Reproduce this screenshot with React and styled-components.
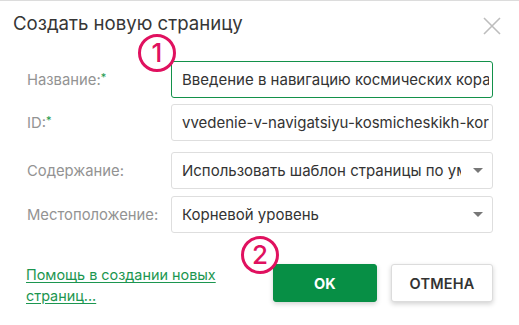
import React from "react";
import styled, { createGlobalStyle } from "styled-components";

const Global = createGlobalStyle`
  html, body { margin: 0; padding: 0; background: #fff; }
  body { font-family: Inter, "Open Sans", sans-serif; }
  * { box-sizing: border-box; }
`;

const Dialog = styled.div`
  position: relative;
  width: 519px;
  height: 325px;
  background: #fff;
  border-top: 1px solid #dcdcdc;
  overflow: hidden;
`;

const Header = styled.div`
  display: flex;
  align-items: flex-start;
  justify-content: space-between;
  padding: 10px 18px 0 13px;
  height: 60px;
`;

const Title = styled.h1`
  margin: 0;
  font-size: 18.6px;
  line-height: 24px;
  font-weight: 400;
  color: #363636;
`;

const Close = styled.button`
  margin-top: 6px;
  padding: 0;
  border: 0;
  background: none;
  width: 18px;
  height: 18px;
  display: flex;
  cursor: pointer;
`;

const Form = styled.div`
  display: flex;
  flex-direction: column;
  padding: 0 26px 0 27px;
`;

const Row = styled.div`
  display: grid;
  grid-template-columns: 144px minmax(0, 1fr);
  align-items: center;
  margin-top: ${(p) => p.$top || 0}px;
`;

const Label = styled.label`
  font-size: 14.8px;
  color: #939393;
`;

const Req = styled.span`
  color: #1a9a4c;
  font-size: 11px;
  vertical-align: top;
  position: relative;
  top: -1px;
`;

const TextInput = styled.input`
  width: 100%;
  height: 37px;
  border: 1px solid ${(p) => (p.$focus ? "#13914a" : "#dedede")};
  border-radius: 3px;
  padding: 0 3px 0 10px;
  font: inherit;
  font-size: 15px;
  color: #333;
  background: #fff;
  outline: none;
`;

const Select = styled.div`
  height: 37px;
  border: 1px solid #dedede;
  border-radius: 3px;
  display: flex;
  align-items: center;
  padding: 0 9px 0 10px;
  gap: 12px;
`;

const SelectText = styled.span`
  flex: 1;
  min-width: 0;
  overflow: hidden;
  white-space: nowrap;
  font-size: 15px;
  color: #333;
`;

const Footer = styled.div`
  display: flex;
  justify-content: space-between;
  align-items: flex-start;
  padding: 31px 26px 0 26px;
`;

const HelpLink = styled.a`
  font-size: 14.4px;
  line-height: 21px;
  color: #1c9650;
  text-decoration: underline;
  text-underline-offset: 2px;
`;

const Buttons = styled.div`
  display: flex;
  gap: 14px;
`;

const Button = styled.button`
  height: 38px;
  width: ${(p) => p.$w}px;
  border-radius: 3px;
  font-family: inherit;
  font-size: 14.5px;
  font-weight: ${(p) => (p.$primary ? 700 : 600)};
  letter-spacing: 0.2px;
  color: ${(p) => (p.$primary ? "#fff" : "#333")};
  background: ${(p) => (p.$primary ? "#078f45" : "#fff")};
  border: 1px solid ${(p) => (p.$primary ? "#078f45" : "#dcdcdc")};
  box-shadow: 0 2px 5px rgba(0, 0, 0, 0.18);
  cursor: pointer;
`;

const Badge = styled.div`
  position: absolute;
  left: ${(p) => p.$x - 19}px;
  top: ${(p) => p.$y - 19}px;
  width: 38px;
  height: 38px;
  border: 3px solid #e0115f;
  border-radius: 50%;
  color: #e0115f;
  display: flex;
  align-items: center;
  justify-content: center;
  font-size: 26px;
  font-weight: 500;
  line-height: 1;
  background: transparent;
`;

const Arrow = () => (
  <svg width="10" height="5" viewBox="0 0 10 5">
    <path d="M0 0h10L5 5z" fill="#777" />
  </svg>
);

export default function App() {
  return (
    <>
      <Global />
      <Dialog>
        <Header>
          <Title>Создать новую страницу</Title>
          <Close aria-label="Закрыть">
            <svg width="18" height="18" viewBox="0 0 18 18">
              <path d="M1 1l16 16M17 1L1 17" stroke="#bdbdbd" strokeWidth="1.6" />
            </svg>
          </Close>
        </Header>
        <Form>
          <Row>
            <Label>
              Название:<Req>*</Req>
            </Label>
            <TextInput $focus readOnly value="Введение в навигацию космических кораблей" />
          </Row>
          <Row $top={6}>
            <Label>
              ID:<Req>*</Req>
            </Label>
            <TextInput readOnly value="vvedenie-v-navigatsiyu-kosmicheskikh-korabley" />
          </Row>
          <Row $top={11}>
            <Label>Содержание:</Label>
            <Select>
              <SelectText>Использовать шаблон страницы по умолчанию</SelectText>
              <Arrow />
            </Select>
          </Row>
          <Row $top={7}>
            <Label>Местоположение:</Label>
            <Select>
              <SelectText>Корневой уровень</SelectText>
              <Arrow />
            </Select>
          </Row>
        </Form>
        <Footer>
          <HelpLink href="#">
            Помощь в создании новых
            <br />
            страниц...
          </HelpLink>
          <Buttons>
            <Button $primary $w={104}>OK</Button>
            <Button $w={102}>ОТМЕНА</Button>
          </Buttons>
        </Footer>
        <Badge $x={157} $y={52}>1</Badge>
        <Badge $x={260} $y={254}>2</Badge>
      </Dialog>
    </>
  );
}
